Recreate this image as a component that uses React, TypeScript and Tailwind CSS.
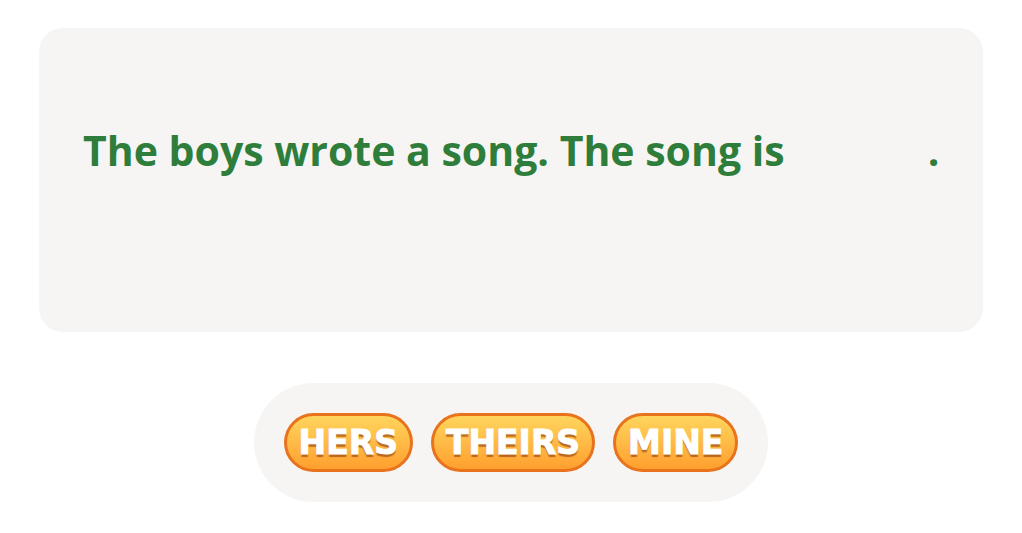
import React from "react";

function WordButton({ label }: { label: string }) {
  return (
    <button className="h-[59px] px-[12px] rounded-full border-[3px] border-[#e8731c] bg-gradient-to-b from-[#ffd55c] to-[#ff9f2e] flex items-center justify-center">
      <span
        className="text-white text-[33px] leading-none font-bold tracking-[0px] [-webkit-text-stroke:1px_white] [text-shadow:0_3px_1px_rgba(140,55,10,0.6)]"
        style={{ fontFamily: "'DejaVu Sans', sans-serif" }}
      >
        {label}
      </span>
    </button>
  );
}

export default function App() {
  return (
    <div className="w-[1022px] h-[533px] bg-white flex flex-col items-center pt-[28px]">
      <div className="w-[944px] h-[304px] rounded-[24px] bg-[#f6f5f4] pl-[44px] pt-[102px]">
        <div
          className="flex items-baseline text-[#2e7d3a] text-[41px] font-bold leading-none"
          style={{ fontFamily: "'Open Sans', sans-serif" }}
        >
          <span>The boys wrote a song. The song is</span>
          <span className="inline-block w-[143px]"></span>
          <span>.</span>
        </div>
      </div>
      <div className="mt-[51px] h-[119px] rounded-full bg-[#f6f5f4] px-[30px] flex items-center gap-[18px]">
        <WordButton label="HERS" />
        <WordButton label="THEIRS" />
        <WordButton label="MINE" />
      </div>
    </div>
  );
}
